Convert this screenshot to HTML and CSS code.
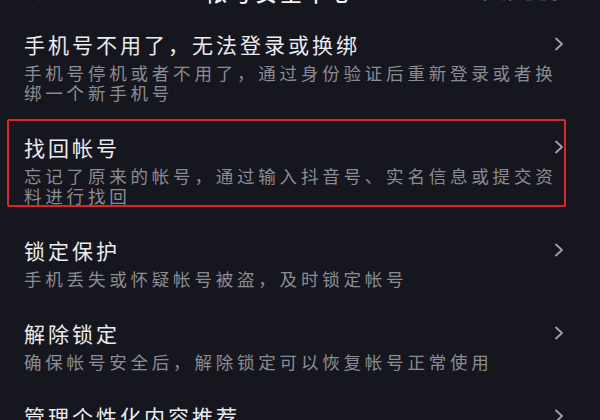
FILE: index.html
```html
<!DOCTYPE html>
<html lang="zh-CN">
<head>
<meta charset="utf-8">
<title>帐号安全中心</title>
<link rel="stylesheet" href="styles.css">
</head>
<body>
<div class="page">
  <header class="topbar">
    <div class="back">
      <svg width="12" height="20" viewBox="0 0 12 20"><path d="M10 2 L2 10 L10 18" fill="none" stroke="#e8e8ea" stroke-width="2.4" stroke-linecap="round" stroke-linejoin="round"/></svg>
    </div>
    <div class="title">帐号安全中心</div>
    <div class="extra">申诉进度</div>
  </header>
  <main class="list">
    <div class="row">
      <div class="text">
        <div class="name">手机号不用了，无法登录或换绑</div>
        <div class="desc">手机号停机或者不用了，通过身份验证后重新登录或者换绑一个新手机号</div>
      </div>
      <svg class="chev" width="10" height="14" viewBox="0 0 10 14"><path d="M2 1.5 L8 7 L2 12.5" fill="none" stroke="#a2a3a8" stroke-width="1.8" stroke-linecap="round" stroke-linejoin="round"/></svg>
    </div>
    <div class="row marked">
      <div class="text">
        <div class="name">找回帐号</div>
        <div class="desc">忘记了原来的帐号，通过输入抖音号、实名信息或提交资料进行找回</div>
      </div>
      <svg class="chev" width="10" height="14" viewBox="0 0 10 14"><path d="M2 1.5 L8 7 L2 12.5" fill="none" stroke="#a2a3a8" stroke-width="1.8" stroke-linecap="round" stroke-linejoin="round"/></svg>
    </div>
    <div class="row">
      <div class="text">
        <div class="name">锁定保护</div>
        <div class="desc">手机丢失或怀疑帐号被盗，及时锁定帐号</div>
      </div>
      <svg class="chev" width="10" height="14" viewBox="0 0 10 14"><path d="M2 1.5 L8 7 L2 12.5" fill="none" stroke="#a2a3a8" stroke-width="1.8" stroke-linecap="round" stroke-linejoin="round"/></svg>
    </div>
    <div class="row">
      <div class="text">
        <div class="name">解除锁定</div>
        <div class="desc">确保帐号安全后，解除锁定可以恢复帐号正常使用</div>
      </div>
      <svg class="chev" width="10" height="14" viewBox="0 0 10 14"><path d="M2 1.5 L8 7 L2 12.5" fill="none" stroke="#a2a3a8" stroke-width="1.8" stroke-linecap="round" stroke-linejoin="round"/></svg>
    </div>
    <div class="row">
      <div class="text">
        <div class="name">管理个性化内容推荐</div>
        <div class="desc">管理你的个性化内容推荐设置</div>
      </div>
      <svg class="chev" width="10" height="14" viewBox="0 0 10 14"><path d="M2 1.5 L8 7 L2 12.5" fill="none" stroke="#a2a3a8" stroke-width="1.8" stroke-linecap="round" stroke-linejoin="round"/></svg>
    </div>
  </main>
</div>
</body>
</html>
```

FILE: styles.css
```css
html, body {
  margin: 0;
  padding: 0;
  background: #16161f;
}
body {
  font-family: "Noto Sans CJK SC", "Noto Sans", sans-serif;
  color: #ececee;
  overflow: hidden;
}
.page {
  width: 600px;
  height: 420px;
  overflow: hidden;
  background: #16161f;
}
.topbar {
  height: 30px;
  margin-top: -24px;
  display: flex;
  align-items: center;
}
.back {
  width: 205px;
  padding-left: 30px;
  box-sizing: border-box;
  display: flex;
  align-items: center;
}
.title {
  font-size: 22px;
  font-weight: 500;
  letter-spacing: 3px;
  line-height: 30px;
  color: #f2f2f4;
}
.extra {
  margin-left: auto;
  padding-right: 40px;
  font-size: 18px;
  letter-spacing: 3px;
  line-height: 30px;
  color: #9a9ba0;
}
.list {
  padding-top: 26px;
  display: flex;
  flex-direction: column;
  gap: 32px;
}
.row {
  display: flex;
  align-items: flex-start;
  padding-left: 24px;
}
.row.marked {
  position: relative;
}
.row.marked::after {
  content: "";
  position: absolute;
  left: 7px;
  right: 34px;
  top: -16px;
  bottom: -1px;
  border: 2px solid #d8262c;
  border-radius: 2px;
  pointer-events: none;
}
.text {
  width: 540px;
}
.name {
  font-size: 21px;
  line-height: 24px;
  letter-spacing: 3px;
  color: #ececee;
}
.desc {
  margin-top: 7px;
  font-size: 17.5px;
  line-height: 20px;
  letter-spacing: 3.8px;
  color: #8b8c92;
}
.chev {
  margin-left: -10px;
  margin-top: 5px;
  flex-shrink: 0;
}
```
